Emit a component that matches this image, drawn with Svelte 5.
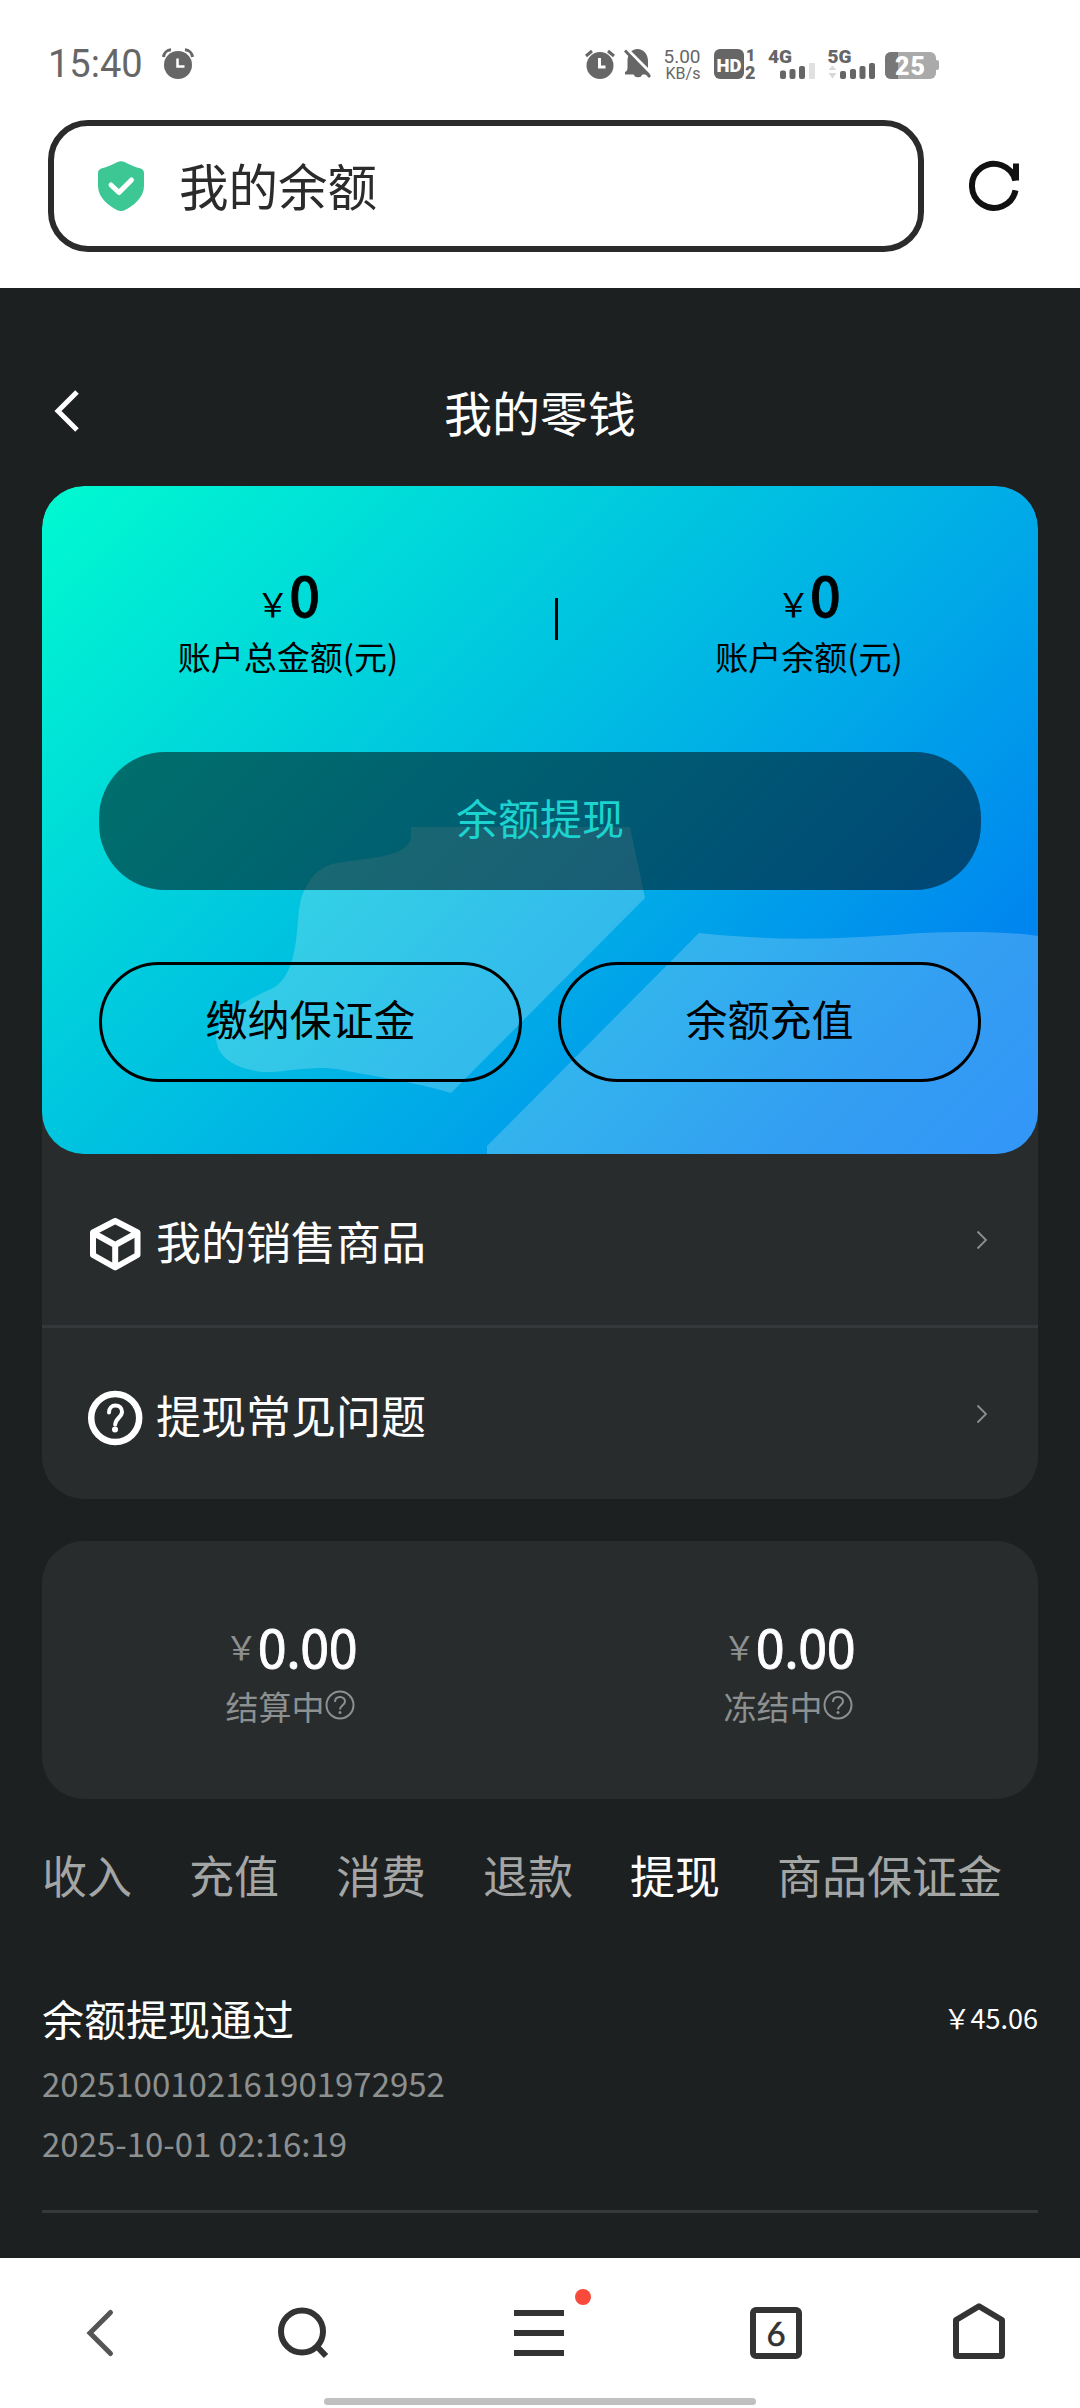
<script>
  let activeTab = 4;
  const yen = '\uFFE5';
  const tabs = ['收入', '充值', '消费', '退款', '提现', '商品保证金'];
  const menus = [
    { icon: 'box', label: '我的销售商品' },
    { icon: 'help', label: '提现常见问题' }
  ];
  const balances = [
    { amount: '0', label: '账户总金额(元)' },
    { amount: '0', label: '账户余额(元)' }
  ];
  const pending = [
    { amount: '0.00', label: '结算中' },
    { amount: '0.00', label: '冻结中' }
  ];
  const records = [
    { title: '余额提现通过', amount: '45.06', no: '2025100102161901972952', time: '2025-10-01 02:16:19' }
  ];
  function switchTab(index) {
    activeTab = index;
  }
</script>

<div class="screen">
  <header class="browser">
    <div class="status">
      <span class="clock">15:40</span>
      <svg class="alarm-left" width="32" height="32" viewBox="0 0 32 32">
        <circle cx="16" cy="17" r="14" fill="#666" />
        <path d="M1.500 9A8 8 0 0 1 9 1.800M23 1.800A8 8 0 0 1 30.500 9" fill="none" stroke="#666" stroke-width="3" />
        <path d="M15.500 10.500v8h7" fill="none" stroke="#fff" stroke-width="2.500" />
      </svg>
      <svg class="status-icons" width="360" height="40" viewBox="580 43 360 40">
        <circle cx="600" cy="64.500" r="13.500" fill="#666" />
        <path d="M586 55l6-5M608 50l6 5" stroke="#666" stroke-width="3" />
        <path d="M599.500 57v9h6" fill="none" stroke="#fff" stroke-width="3" />
        <path d="M625 73.500v-2.500c2-1 2.500-2 2.500-5v-6c0-7 4-12 10-12s10.500 5 10.500 12v6c0 3 .5 4 2.500 5v2.500h-8a5 5 0 0 1-9 0z" fill="#666" />
        <path d="M627 48l25 25" stroke="#fff" stroke-width="3" />
        <path d="M625 49.500l25 26.500" stroke="#666" stroke-width="2.800" />
        <text class="net" x="663.500" y="62" textLength="37">5.00</text>
        <text class="net small" x="665.500" y="77.500" textLength="35">KB/s</text>
        <rect x="714" y="48" width="30" height="30" rx="6" fill="#666" />
        <text class="bold" x="716.500" y="70.500" font-size="19" fill="#fff" textLength="25" lengthAdjust="spacingAndGlyphs">HD</text>
        <text class="bold" x="746" y="60" font-size="16">1</text>
        <text class="bold" x="745" y="78" font-size="18">2</text>
        <text class="bold" x="768" y="62" font-size="19" textLength="24" lengthAdjust="spacingAndGlyphs">4G</text>
        <g fill="#666">
          <rect x="780" y="69.500" width="6" height="8.500" rx="2" />
          <rect x="789.500" y="68" width="6" height="10" rx="2" />
          <rect x="799" y="65" width="6" height="13" rx="2" />
          <rect x="809" y="62" width="6" height="16" rx="1" fill="#e0e0e0" />
        </g>
        <text class="bold" x="827.500" y="62" font-size="19" textLength="24" lengthAdjust="spacingAndGlyphs">5G</text>
        <path d="M828.500 69l4-4.500 4 4.500zM828.500 72h8l-4 5.500z" fill="#d9d9d9" />
        <g fill="#666">
          <rect x="840" y="70" width="6" height="8" rx="2" />
          <rect x="850" y="68" width="6" height="10" rx="2" />
          <rect x="859.500" y="65" width="6" height="13" rx="2" />
          <rect x="869" y="62" width="6" height="16" rx="2" />
        </g>
        <rect x="885" y="51" width="51" height="27" rx="6" fill="#aaa" />
        <path d="M898 51h-7a6 6 0 0 0-6 6v15a6 6 0 0 0 6 6h7z" fill="#777" />
        <rect x="935" y="59" width="4" height="10" rx="2" fill="#aaa" />
        <text class="bold" x="895" y="74" font-size="25" fill="#fff" textLength="30">25</text>
      </svg>
    </div>
    <div class="address">
      <div class="url">
        <svg width="46" height="50" viewBox="0 0 46 50">
          <path d="M19.500 1Q23-.6 26.500 1C32 4 37 6 42 7.200Q46 8.500 46 12v13C46 37 35 45 26 49.500Q23 50.600 20 49.500C11 45 0 37 0 25V12Q0 8.500 4 7.200C9 6 14 4 19.500 1z" fill="#3cc795" />
          <path d="M13 24l8 7.500L33.500 19" fill="none" stroke="#fff" stroke-width="5" stroke-linecap="round" stroke-linejoin="round" />
        </svg>
        <span>我的余额</span>
      </div>
      <svg width="52" height="52" viewBox="0 0 52 52">
        <path d="M46.500 30.300A22 22 0 1 1 46.300 20.500" fill="none" stroke="#111" stroke-width="6" />
        <path d="M47 3.500v17" stroke="#111" stroke-width="6" />
      </svg>
    </div>
  </header>

  <main>
    <div class="nav">
      <svg width="30" height="46" viewBox="0 0 30 46"><path d="M26 4L7 23l19 19" fill="none" stroke="#fff" stroke-width="5" /></svg>
      <h1>我的零钱</h1>
    </div>

    <section class="wallet">
      <div class="card">
        <svg class="pattern" width="996" height="668" viewBox="0 0 996 668">
          <path d="M369 341H588L603 412L409 607C372 596 330 590 300 584C270 578 245 587 220 586C190 582 174 570 174 550C176 525 215 510 233 501C262 480 251 425 262 405C270 388 280 378 302 376C330 372 366 370 369 352z" />
          <path d="M657 447C760 458 830 450 880 447C930 445 970 446 996 450V668H445V660z" />
        </svg>
        <div class="balances">
          {#each balances as item, index}
            {#if index > 0}<i class="split"></i>{/if}
            <div class="balance">
              <p><small>{yen}</small><b>{item.amount}</b></p>
              <span>{item.label}</span>
            </div>
          {/each}
        </div>
        <button class="withdraw">余额提现</button>
        <div class="actions">
          <button>缴纳保证金</button>
          <button>余额充值</button>
        </div>
      </div>
      {#each menus as menu}
        <div class="menu">
          {#if menu.icon === 'box'}
            <svg width="56" height="56" viewBox="0 0 56 56" fill="none" stroke="#fff" stroke-width="6" stroke-linejoin="round">
              <path d="M28.200 5L50.500 16.500v22.500L28.200 51.500 6 39V16.500z" />
              <path d="M6.500 17l21.700 12 21.700-12M28.200 29v22" />
            </svg>
          {:else}
            <svg width="56" height="56" viewBox="0 0 56 56" fill="none" stroke="#fff">
              <circle cx="28.200" cy="28" r="24" stroke-width="6.500" />
              <path d="M22 22.500c0-4.500 2.800-7 6.500-7s6.500 2.700 6.500 6.300c0 5.700-6.500 6.200-6.800 12.700" stroke-width="4" stroke-linecap="round" />
              <circle cx="28" cy="39.500" r="3" fill="#fff" stroke="none" />
            </svg>
          {/if}
          <span>{menu.label}</span>
          <svg class="arrow" width="12" height="20" viewBox="0 0 12 20"><path d="M1.500 1.500L10 10l-8.500 8.500" fill="none" stroke="#8c8f90" stroke-width="1.800" /></svg>
        </div>
      {/each}
    </section>

    <section class="pending">
      {#each pending as item}
        <div class="pending-item">
          <p><small>{yen}</small><b>{item.amount}</b></p>
          <span>
            {item.label}
            <svg width="30" height="30" viewBox="0 0 30 30" fill="none" stroke="#8d9090">
              <circle cx="15" cy="15" r="13.500" stroke-width="2" />
              <path d="M10 12c0-3 2-5 5-5s5 2 5 4.600c0 3.500-5 4-5 8" stroke-width="2" />
              <circle cx="15" cy="22.500" r="1.500" fill="#8d9090" stroke="none" />
            </svg>
          </span>
        </div>
      {/each}
    </section>

    <div class="tabs">
      {#each tabs as tab, index}
        <button class:active={activeTab === index} on:click={() => switchTab(index)}>{tab}</button>
      {/each}
    </div>

    {#each records as record}
      <div class="record">
        <div class="record-head">
          <h2>{record.title}</h2>
          <span>{yen}{record.amount}</span>
        </div>
        <p>{record.no}</p>
        <p>{record.time}</p>
      </div>
    {/each}
  </main>

  <footer>
    <div class="toolbar">
      <svg width="56" height="60" viewBox="0 0 56 60"><path d="M39.500 9.500L19 30l20.500 20.500" fill="none" stroke="#555" stroke-width="5" stroke-linecap="round" /></svg>
      <svg class="search" width="56" height="60" viewBox="0 0 56 60" fill="none" stroke="#333" stroke-width="6">
        <circle cx="26" cy="28.500" r="21" />
        <path d="M40.500 43l9.500 10" />
      </svg>
      <div class="more">
        <svg width="56" height="60" viewBox="0 0 56 60"><path d="M3 10h50M3 30h50M3 50h50" stroke="#333" stroke-width="6" /></svg>
        <i class="dot"></i>
      </div>
      <div class="pages"><span>6</span></div>
      <svg class="home" width="56" height="60" viewBox="0 0 56 60"><path d="M5 17L28 3.200 51 17V51.500Q51 53 49.500 53h-43Q5 53 5 51.500z" fill="none" stroke="#333" stroke-width="6" stroke-linejoin="round" /></svg>
    </div>
    <div class="handle"></div>
  </footer>
</div>

<style>
  :global(body) {
    margin: 0;
    background: #1d2021;
  }

  .screen {
    width: 1080px;
    height: 2408px;
    display: flex;
    flex-direction: column;
    overflow: hidden;
    font-family: "Noto Sans CJK SC", sans-serif;
    color: #fff;
  }

  .screen :global(svg) {
    display: block;
    flex: none;
  }

  h1, h2, p {
    margin: 0;
    font-weight: 400;
  }

  button {
    padding: 0;
    border: none;
    background: none;
    font: inherit;
    color: inherit;
  }

  /* Browser bar */
  .browser {
    height: 288px;
    background: #fff;
    flex: none;
  }

  .status {
    height: 120px;
    padding: 7px 0 0 48px;
    box-sizing: border-box;
    display: flex;
    align-items: center;
    font-family: Roboto, sans-serif;
  }

  .clock {
    width: 114px;
    font-size: 38px;
    line-height: 44px;
    color: #666;
  }

  .status-icons {
    margin-left: 386px;
  }

  .status-icons text {
    fill: #666;
  }

  .status-icons text[fill] {
    fill: #fff;
  }

  .net {
    font-size: 19px;
  }

  .small {
    font-size: 16px;
  }

  .bold {
    font-weight: 900;
  }

  .address {
    display: flex;
    align-items: center;
    gap: 45px;
    padding-left: 48px;
  }

  .url {
    width: 876px;
    height: 132px;
    box-sizing: border-box;
    padding-left: 44px;
    display: flex;
    align-items: center;
    gap: 35px;
    border: 6px solid #2b2b2b;
    border-radius: 40px;
    font-size: 49.5px;
    color: #2b2b2b;
  }

  .url span {
    padding-bottom: 4px;
  }

  /* Page */
  main {
    flex: 1;
    padding: 0 42px;
    background: #1d2021;
  }

  .nav {
    height: 198px;
    padding-top: 50px;
    box-sizing: border-box;
    display: flex;
    align-items: center;
  }

  .nav svg {
    margin: -3px 0 0 9px;
  }

  h1 {
    flex: 1;
    margin-right: 39px;
    padding-bottom: 3px;
    font-size: 48px;
    line-height: 72px;
    text-align: center;
  }

  .wallet {
    background: #282c2d;
    border-radius: 42px;
    overflow: hidden;
  }

  .card {
    position: relative;
    height: 668px;
    padding: 80px 57px 0;
    box-sizing: border-box;
    border-radius: 42px;
    overflow: hidden;
    background: linear-gradient(135deg, #00fad0 0%, #00a8e8 62%, #0086ef 85%, #007cf7 100%);
    color: #000;
  }

  .pattern {
    position: absolute;
    left: 0;
    top: 0;
    fill: #fff;
    fill-opacity: 0.2;
  }

  .balances {
    position: relative;
    height: 186px;
    display: flex;
    padding: 0 61px 0 78px;
  }

  .balance {
    width: 226px;
    margin-top: -9px;
    text-align: center;
  }

  .balance p {
    height: 79px;
    line-height: 74px;
    white-space: nowrap;
  }

  .balance small, .pending small {
    font-size: 33px;
  }

  .balance b {
    font-size: 54px;
    font-weight: 500;
    -webkit-text-stroke: 0.8px #000;
  }

  .balance span {
    display: block;
    font-size: 33px;
    line-height: 40px;
  }

  .split {
    width: 3px;
    height: 42px;
    margin: 32px 140px 0 156px;
    background: #000;
  }

  .withdraw {
    position: relative;
    display: block;
    width: 882px;
    height: 138px;
    padding-bottom: 9px;
    border-radius: 66px;
    background: rgba(0, 0, 0, 0.5);
    font-size: 42px;
    color: #1cd3cf;
  }

  .actions {
    position: relative;
    margin-top: 72px;
    display: flex;
    gap: 36px;
  }

  .actions button {
    flex: 1;
    height: 120px;
    padding-bottom: 9px;
    border: 3px solid #000;
    border-radius: 60px;
    font-size: 42px;
  }

  .menu {
    height: 174px;
    padding: 0 50px 0 45px;
    box-sizing: border-box;
    display: flex;
    align-items: center;
    font-size: 45px;
  }

  .menu + .menu {
    height: 171px;
  }

  .menu:not(:last-child) {
    border-bottom: 3px solid #34383a;
  }

  .menu svg:first-child {
    margin-top: 9px;
  }

  .menu span {
    flex: 1;
    margin-left: 13px;
    padding-top: 1px;
  }

  .pending {
    height: 258px;
    margin-top: 42px;
    padding-top: 66px;
    box-sizing: border-box;
    display: flex;
    background: #282c2d;
    border-radius: 42px;
  }

  .pending-item {
    width: 498px;
    display: flex;
    flex-direction: column;
    align-items: center;
  }

  .pending-item p {
    height: 79px;
    line-height: 78px;
  }

  .pending-item b {
    font-size: 52px;
    font-weight: 400;
    letter-spacing: -0.4px;
    -webkit-text-stroke: 0.8px #fff;
  }

  .pending-item small, .pending-item span {
    color: #8d9090;
  }

  .pending-item small {
    vertical-align: 8px;
  }

  .pending-item span {
    display: flex;
    align-items: center;
    font-size: 33px;
    line-height: 40px;
  }

  .pending-item svg {
    margin: -3px 2px 0 0;
  }

  /* Tabs */
  .tabs {
    margin-top: 42px;
    display: flex;
    gap: 57px;
    font-size: 45px;
    line-height: 68px;
    color: #a4a6a6;
  }

  .tabs .active {
    color: #fff;
  }

  .record {
    margin-top: 78px;
    height: 223px;
    border-bottom: 3px solid #36393a;
    font-size: 33px;
    color: #8d9090;
  }

  .record-head {
    height: 66px;
    display: flex;
    justify-content: space-between;
    align-items: flex-start;
    color: #fff;
    font-size: 27px;
    line-height: 62px;
  }

  h2 {
    font-size: 42px;
  }

  .record p {
    line-height: 60px;
  }

  /* Bottom toolbar */
  footer {
    height: 150px;
    background: #fff;
    flex: none;
  }

  .toolbar {
    height: 140px;
    padding: 45px 0 0 71px;
    box-sizing: border-box;
    display: flex;
    align-items: flex-start;
  }

  .search, .home {
    margin-left: 149px;
  }

  .more {
    position: relative;
    margin-left: 179px;
  }

  .dot {
    position: absolute;
    left: 64px;
    top: -14px;
    width: 16px;
    height: 16px;
    border-radius: 50%;
    background: #fa4a3c;
  }

  .pages {
    width: 52px;
    height: 52px;
    margin: 4px 0 0 183px;
    box-sizing: border-box;
    border: 6px solid #333;
    border-radius: 6px;
    font: 400 33px/40px Lato, sans-serif;
    -webkit-text-stroke: 0.6px #333;
    text-align: center;
    color: #333;
  }

  .handle {
    width: 432px;
    height: 7px;
    margin: 0 auto;
    border-radius: 4px;
    background: #c0c0c0;
  }
</style>
